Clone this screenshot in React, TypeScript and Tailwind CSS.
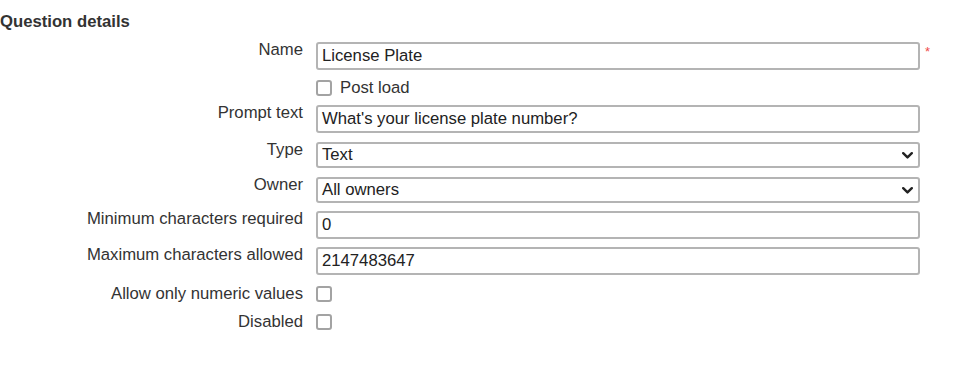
import React from "react";

const font = { fontFamily: '"Liberation Sans", Arial, sans-serif' };

function Chevron() {
  return (
    <svg width="11" height="7" viewBox="0 0 11 7" className="mr-[5px]">
      <path d="M1.2 1.2 L5.5 5.4 L9.8 1.2" fill="none" stroke="#222" strokeWidth="2.4" strokeLinecap="round" strokeLinejoin="round" />
    </svg>
  );
}

function Box() {
  return <div className="w-[16px] h-[16px] rounded-[3px] border-2 border-[#a3a3a3] bg-white shrink-0" />;
}

function TextBox({ value }: { value: string }) {
  return (
    <div className="mt-[2px] w-[604px] h-[28px] rounded-[3px] border-2 border-[#b4b4b4] bg-white flex items-center pl-[4px] text-[#222] whitespace-nowrap">
      {value}
    </div>
  );
}

function SelectBox({ value }: { value: string }) {
  return (
    <div className="mt-[2px] w-[604px] h-[26px] rounded-[3px] border-2 border-[#b4b4b4] bg-white flex items-center justify-between pl-[4px] text-[#222] whitespace-nowrap">
      <span>{value}</span>
      <Chevron />
    </div>
  );
}

function Label({ children }: { children: React.ReactNode }) {
  return <div className="w-[303px] shrink-0 text-right text-[#333] leading-[19px] whitespace-nowrap">{children}</div>;
}

export default function App() {
  return (
    <div className="w-[975px] h-[391px] bg-white text-[16.7px] overflow-hidden" style={font}>
      <div className="pt-[12px] font-bold leading-[19px] text-[#333]">Question details</div>

      <div className="mt-[9px] flex items-start">
        <Label>Name</Label>
        <div className="ml-[13px] flex items-start">
          <TextBox value="License Plate" />
          <span className="ml-[5px] mt-[5px] text-[#ef4b4b] text-[13px] leading-[13px]">*</span>
        </div>
      </div>

      <div className="mt-[8px] flex items-center h-[19px] pl-[316px]">
        <Box />
        <span className="ml-[8px] text-[#333] leading-[19px]">Post load</span>
      </div>

      <div className="mt-[6px] flex items-start">
        <Label>Prompt text</Label>
        <div className="ml-[13px]">
          <TextBox value="What's your license plate number?" />
        </div>
      </div>

      <div className="mt-[7px] flex items-start">
        <Label>Type</Label>
        <div className="ml-[13px]">
          <SelectBox value="Text" />
        </div>
      </div>

      <div className="mt-[7px] flex items-start">
        <Label>Owner</Label>
        <div className="ml-[13px]">
          <SelectBox value="All owners" />
        </div>
      </div>

      <div className="mt-[6px] flex items-start">
        <Label>Minimum characters required</Label>
        <div className="ml-[13px]">
          <TextBox value="0" />
        </div>
      </div>

      <div className="mt-[6px] flex items-start">
        <Label>Maximum characters allowed</Label>
        <div className="ml-[13px]">
          <TextBox value="2147483647" />
        </div>
      </div>

      <div className="mt-[9px] flex items-center h-[19px]">
        <Label>Allow only numeric values</Label>
        <div className="ml-[13px]">
          <Box />
        </div>
      </div>

      <div className="mt-[9px] flex items-center h-[19px]">
        <Label>Disabled</Label>
        <div className="ml-[13px]">
          <Box />
        </div>
      </div>
    </div>
  );
}
